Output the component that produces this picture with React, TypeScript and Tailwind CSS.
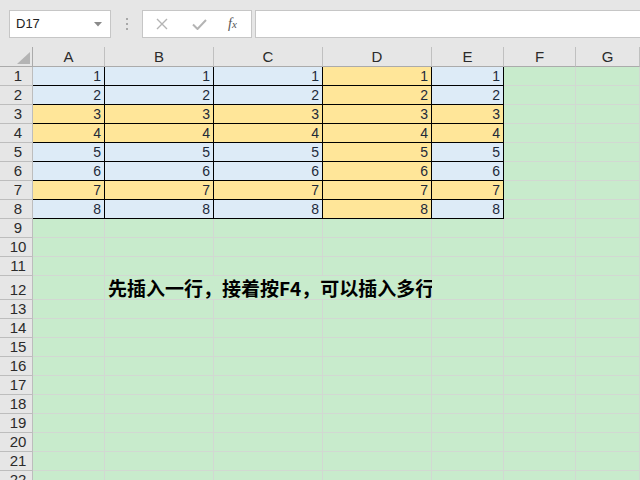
import React from "react";

const B = "bg-[#ddebf7]";
const O = "bg-[#ffe699]";

// colour of columns A-E for rows 1-8
const fills: string[][] = [
  [B, B, B, O, B],
  [B, B, B, O, B],
  [O, O, O, O, O],
  [O, O, O, O, O],
  [B, B, B, O, B],
  [B, B, B, O, B],
  [O, O, O, O, O],
  [B, B, B, O, B],
];

const cols = ["A", "B", "C", "D", "E", "F", "G"];

function RowHead({ n, tall }: { n: number; tall?: boolean }) {
  return (
    <div
      className={`${tall ? "h-[24px]" : "h-[19px]"} bg-[#e6e6e6] border-r border-b border-[#bdbdbd] flex items-end justify-center pl-[4px] text-[15px] leading-[18px] text-[#2b2b2b]`}
    >
      {n}
    </div>
  );
}

function Green({ tall }: { tall?: boolean }) {
  return <div className={`${tall ? "h-[24px]" : "h-[19px]"} bg-[#c8ebcc] border-r border-b border-[#d2d8d2]`} />;
}

export default function App() {
  const rows: React.ReactNode[] = [];

  for (let r = 0; r < 8; r++) {
    rows.push(<RowHead key={`h${r}`} n={r + 1} />);
    fills[r].forEach((f, c) => {
      rows.push(
        <div
          key={`c${r}-${c}`}
          className={`h-[19px] ${f} border-r border-b border-black text-right pr-[3px] text-[14px] leading-[18px] text-[#1e2a3a]`}
        >
          {r + 1}
        </div>
      );
    });
    rows.push(<Green key={`f${r}`} />, <Green key={`g${r}`} />);
  }

  for (let r = 9; r <= 22; r++) {
    const tall = r === 12;
    rows.push(<RowHead key={`h${r}`} n={r} tall={tall} />);
    if (tall) {
      rows.push(<Green key={`a${r}`} tall />);
      rows.push(
        <div
          key={`t${r}`}
          className="col-span-3 h-[24px] bg-[#c8ebcc] border-r border-b border-[#d2d8d2] pl-[3px] flex items-end"
        >
          <span className="whitespace-nowrap font-bold text-[19px] leading-[22px] text-black font-['Noto_Sans_CJK_SC',sans-serif]">
            先插入一行，接着按F4，可以插入多行
          </span>
        </div>
      );
      for (let c = 0; c < 3; c++) rows.push(<Green key={`e${r}-${c}`} tall />);
    } else {
      for (let c = 0; c < 7; c++) rows.push(<Green key={`e${r}-${c}`} />);
    }
  }

  return (
    <div className="w-[640px] h-[480px] overflow-hidden bg-[#e6e6e6] font-['Liberation_Sans',Arial,sans-serif]">
      {/* formula bar */}
      <div className="h-[47px] flex items-start pt-[10px] pl-[9px]">
        <div className="w-[102px] h-[28px] bg-white border border-[#c6c6c6] flex items-center pl-[6px] pr-[8px]">
          <span className="text-[13px] text-[#222] flex-1">D17</span>
          <svg width="8" height="5" viewBox="0 0 8 5">
            <path d="M0 0 L8 0 L4 4.5 Z" fill="#8a8a8a" />
          </svg>
        </div>
        <div className="w-[31px] h-[28px] flex flex-col items-center justify-center gap-[3px]">
          <span className="w-[2px] h-[2px] bg-[#a8a8a8]" />
          <span className="w-[2px] h-[2px] bg-[#a8a8a8]" />
          <span className="w-[2px] h-[2px] bg-[#a8a8a8]" />
        </div>
        <div className="w-[110px] h-[28px] bg-white border border-[#c6c6c6] flex items-center">
          <svg width="12" height="12" viewBox="0 0 12 12" className="ml-[13px]">
            <path d="M1 1 L11 11 M11 1 L1 11" stroke="#b4b4b4" strokeWidth="1.4" />
          </svg>
          <svg width="15" height="12" viewBox="0 0 15 12" className="ml-[24px]">
            <path d="M1 6.5 L5.5 11 L14 2" stroke="#b4b4b4" strokeWidth="2" fill="none" />
          </svg>
          <span className="ml-[21px] text-[14px] italic text-[#555] font-['Liberation_Serif',serif] leading-none">
            f<span className="text-[11px]">x</span>
          </span>
        </div>
        <div className="ml-[3px] flex-1 h-[28px] bg-white border-y border-l border-[#c6c6c6]" />
      </div>

      {/* sheet */}
      <div className="grid grid-cols-[33px_72px_109px_109px_109px_72px_72px_1fr]">
        <div className="h-[20px] bg-[#e6e6e6] border-r border-b border-[#ababab] flex items-end justify-end pr-[2px] pb-[2px]">
          <svg width="13" height="12" viewBox="0 0 13 12">
            <path d="M13 0 L13 12 L0 12 Z" fill="#b4b4b4" />
          </svg>
        </div>
        {cols.map((c) => (
          <div
            key={c}
            className="h-[20px] bg-[#e6e6e6] border-r border-b border-r-[#c0c0c0] border-b-[#ababab] text-center text-[15px] leading-[20px] text-[#2b2b2b]"
          >
            {c}
          </div>
        ))}
        {rows}
      </div>
    </div>
  );
}
